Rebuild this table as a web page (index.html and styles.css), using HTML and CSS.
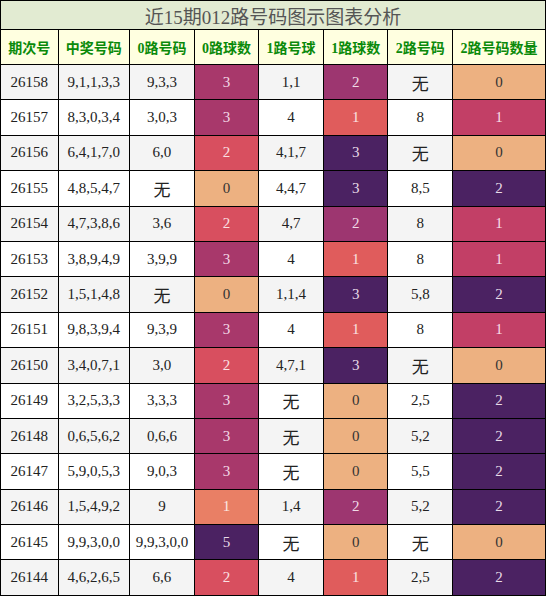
FILE: index.html
```html
<!DOCTYPE html>
<html lang="zh-CN">

<head>
  <meta charset="UTF-8" />
  <meta name="viewport" content="width=device-width, initial-scale=1.0" />
  <title>近15期012路号码图示图表分析</title>
  <link rel="stylesheet" href="styles.css">
</head>

<body>
  <table class="chart">
    <colgroup>
      <col class="c-qi" />
      <col class="c-kj" />
      <col class="c-m" />
      <col class="c-m" />
      <col class="c-m" />
      <col class="c-m" />
      <col class="c-m" />
      <col class="c-last" />
    </colgroup>
    <tr class="title">
      <th colspan="8">近15期012路号码图示图表分析</th>
    </tr>
    <tr class="head">
      <th>期次号</th>
      <th>中奖号码</th>
      <th>0路号码</th>
      <th>0路球数</th>
      <th>1路号球</th>
      <th>1路球数</th>
      <th>2路号码</th>
      <th>2路号码数量</th>
    </tr>
    <!-- 数据行 -->
    <tr><td>26158</td><td>9,1,1,3,3</td><td>9,3,3</td><td class="a3">3</td><td>1,1</td><td class="b2">2</td><td class="cn">无</td><td class="v0">0</td></tr>
    <tr><td>26157</td><td>8,3,0,3,4</td><td>3,0,3</td><td class="a3">3</td><td>4</td><td class="b1">1</td><td>8</td><td class="c1">1</td></tr>
    <tr><td>26156</td><td>6,4,1,7,0</td><td>6,0</td><td class="a2">2</td><td>4,1,7</td><td class="v3">3</td><td class="cn">无</td><td class="v0">0</td></tr>
    <tr><td>26155</td><td>4,8,5,4,7</td><td class="cn">无</td><td class="v0">0</td><td>4,4,7</td><td class="v3">3</td><td>8,5</td><td class="v3">2</td></tr>
    <tr><td>26154</td><td>4,7,3,8,6</td><td>3,6</td><td class="a2">2</td><td>4,7</td><td class="b2">2</td><td>8</td><td class="c1">1</td></tr>
    <tr><td>26153</td><td>3,8,9,4,9</td><td>3,9,9</td><td class="a3">3</td><td>4</td><td class="b1">1</td><td>8</td><td class="c1">1</td></tr>
    <tr><td>26152</td><td>1,5,1,4,8</td><td class="cn">无</td><td class="v0">0</td><td>1,1,4</td><td class="v3">3</td><td>5,8</td><td class="v3">2</td></tr>
    <tr><td>26151</td><td>9,8,3,9,4</td><td>9,3,9</td><td class="a3">3</td><td>4</td><td class="b1">1</td><td>8</td><td class="c1">1</td></tr>
    <tr><td>26150</td><td>3,4,0,7,1</td><td>3,0</td><td class="a2">2</td><td>4,7,1</td><td class="v3">3</td><td class="cn">无</td><td class="v0">0</td></tr>
    <tr><td>26149</td><td>3,2,5,3,3</td><td>3,3,3</td><td class="a3">3</td><td class="cn">无</td><td class="v0">0</td><td>2,5</td><td class="v3">2</td></tr>
    <tr><td>26148</td><td>0,6,5,6,2</td><td>0,6,6</td><td class="a3">3</td><td class="cn">无</td><td class="v0">0</td><td>5,2</td><td class="v3">2</td></tr>
    <tr><td>26147</td><td>5,9,0,5,3</td><td>9,0,3</td><td class="a3">3</td><td class="cn">无</td><td class="v0">0</td><td>5,5</td><td class="v3">2</td></tr>
    <tr><td>26146</td><td>1,5,4,9,2</td><td>9</td><td class="a1">1</td><td>1,4</td><td class="b2">2</td><td>5,2</td><td class="v3">2</td></tr>
    <tr><td>26145</td><td>9,9,3,0,0</td><td>9,9,3,0,0</td><td class="v3">5</td><td class="cn">无</td><td class="v0">0</td><td class="cn">无</td><td class="v0">0</td></tr>
    <tr><td>26144</td><td>4,6,2,6,5</td><td>6,6</td><td class="a2">2</td><td>4</td><td class="b1">1</td><td>2,5</td><td class="v3">2</td></tr>
  </table>
</body>

</html>
```

FILE: styles.css
```css
* {
  margin: 0;
  padding: 0;
}

body {
  background: #fff;
  font-family: "Liberation Serif", "Noto Sans CJK SC", serif;
}

.chart {
  width: 546px;
  border-collapse: collapse;
  table-layout: fixed;
  color: #222;
}

.c-qi {
  width: 57px;
}

.c-kj {
  width: 71px;
}

.c-m {
  width: 64px;
}

.c-last {
  width: 92px;
}

.chart th,
.chart td {
  border: 1px solid #000;
  text-align: center;
  padding: 0;
}

.title th {
  height: 28px;
  background: #e2ebd2;
  color: #555;
  font-size: 19px;
  font-weight: normal;
}

.head th {
  height: 34px;
  background: #ffffe0;
  color: #0a8a0a;
  font-size: 14px;
  font-weight: bold;
}

.chart td {
  height: 34.4px;
  font-size: 15px;
}

/* 隔行底色 */
.chart tr:nth-child(odd) {
  background: #f4f4f4;
}

.chart tr:nth-child(even) {
  background: #fff;
}

.chart td.cn {
  font-size: 17px;
}

/* 色块 */
.chart td.v0 {
  background: #edb181;
  color: #333;
}

.chart td.v3 {
  background: #4b2262;
  color: #e8dbe8;
}

.chart td.a1 {
  background: #e97f65;
  color: #fbe9e2;
}

.chart td.a2 {
  background: #d84f5f;
  color: #fbe1e3;
}

.chart td.a3 {
  background: #a8386b;
  color: #f3dbe6;
}

.chart td.b1 {
  background: #e05c5c;
  color: #fbe1e1;
}

.chart td.b2 {
  background: #9d3670;
  color: #f0dbe7;
}

.chart td.c1 {
  background: #c23f66;
  color: #f8dfe6;
}
```
